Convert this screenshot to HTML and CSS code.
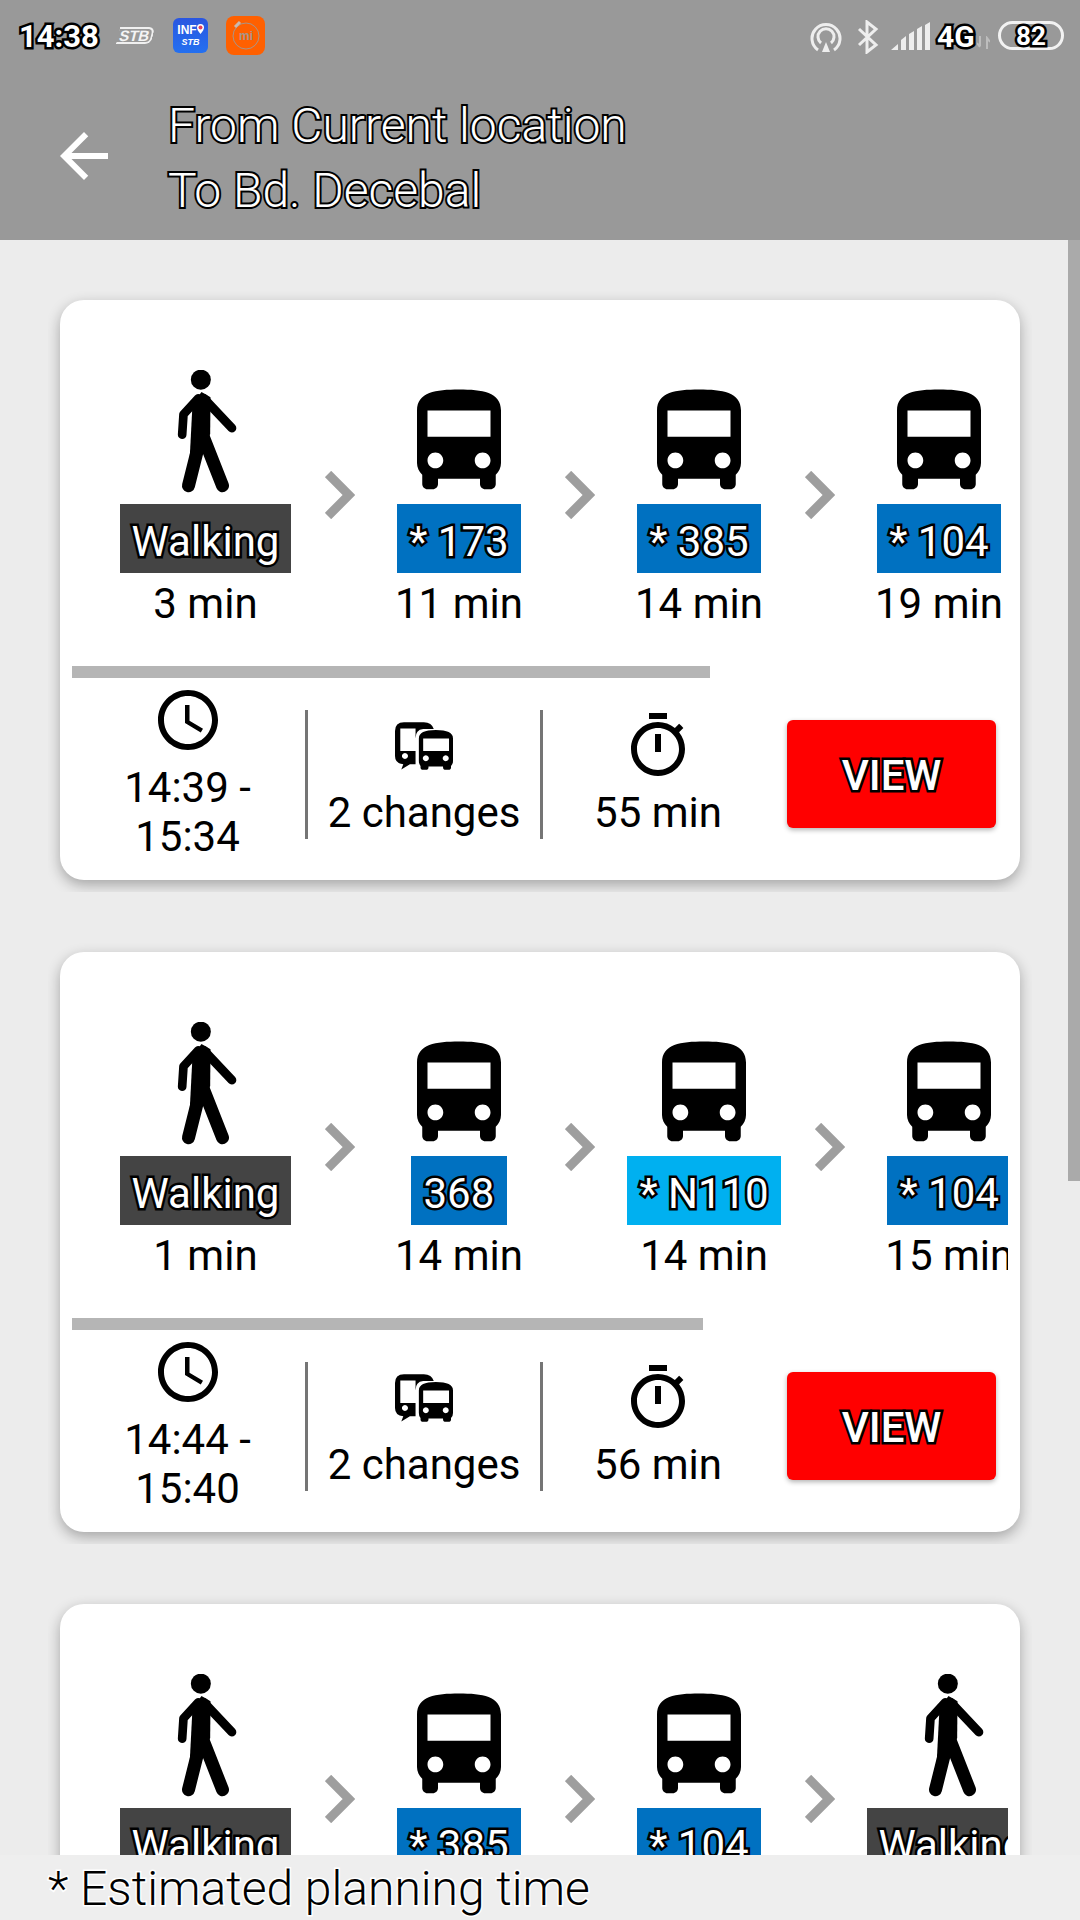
FILE: index.html
```html
<!DOCTYPE html>
<html lang="en">
<head>
    <meta charset="UTF-8">
    <meta name="viewport" content="width=device-width, initial-scale=1.0">
    <title>Route results</title>
    <link rel="stylesheet" href="styles.css">
</head>
<body>
    <svg class="defs" width="0" height="0">
        <defs>
            <symbol id="walk" viewBox="340 90 200 375">
                <circle cx="423" cy="122" r="30"/>
                <path d="M398 195 L425 159 L452 175 L451 285 L430 340 L390 350 Z"/>
                <path d="M432 178 L516 267" fill="none" stroke="#000" stroke-width="27" stroke-linecap="round"/>
                <path d="M415 178 L371 226 L367 287" fill="none" stroke="#000" stroke-width="26" stroke-linecap="round" stroke-linejoin="round"/>
                <path d="M411 340 L386 440" fill="none" stroke="#000" stroke-width="39" stroke-linecap="round"/>
                <path d="M431 295 L488 440" fill="none" stroke="#000" stroke-width="39" stroke-linecap="round"/>
            </symbol>
            <symbol id="bus" viewBox="0 0 24 24">
                <path d="M4 16c0 .88.39 1.67 1 2.22V20c0 .55.45 1 1 1h1c.55 0 1-.45 1-1v-1h8v1c0 .55.45 1 1 1h1c.55 0 1-.45 1-1v-1.78c.61-.55 1-1.34 1-2.22V6c0-3.5-3.58-4-8-4s-8 .5-8 4v10zm3.5 1c-.83 0-1.5-.67-1.5-1.5S6.67 14 7.5 14s1.5.67 1.5 1.5S8.33 17 7.5 17zm9 0c-.83 0-1.5-.67-1.5-1.5s.67-1.5 1.5-1.5 1.5.67 1.5 1.5-.67 1.5-1.5 1.5zm1.5-6H6V6h12v5z"/>
            </symbol>
            <symbol id="chevron" viewBox="0 0 30 48">
                <path d="M3 3 L24 24 L3 45" fill="none" stroke="#9e9e9e" stroke-width="9"/>
            </symbol>
            <symbol id="clock" viewBox="0 0 24 24">
                <path d="M11.99 2C6.47 2 2 6.48 2 12s4.47 10 9.99 10C17.52 22 22 17.52 22 12S17.52 2 11.99 2zM12 20c-4.42 0-8-3.58-8-8s3.58-8 8-8 8 3.58 8 8-3.58 8-8 8zm.5-13H11v6l5.25 3.15.75-1.23-4.5-2.67z"/>
            </symbol>
            <symbol id="changes" viewBox="1005 213 175 144">
                <path fill-rule="evenodd" d="M1032 213 H1092 Q1116 213 1122 234 H1090 Q1067 236 1067 262 V340 H1050 L1024 356 L1030 340 Q1005 338 1005 315 V240 Q1005 213 1032 213 Z M1021 232 V300 H1067 V232 Z M1035 306 a9 9 0 1 0 .1 0 Z"/>
                <path fill-rule="evenodd" d="M1077 262 Q1077 237 1128 237 Q1180 237 1180 262 V330 Q1180 340 1174 345 V350 Q1174 357 1166 357 H1158 Q1150 357 1150 350 V347 H1106 V350 Q1106 357 1098 357 H1090 Q1082 357 1082 350 V345 Q1077 340 1077 330 Z M1090 262 V300 H1168 V262 Z M1098 313 a9 9 0 1 0 .1 0 Z M1158 313 a9 9 0 1 0 .1 0 Z"/>
            </symbol>
            <symbol id="timer" viewBox="0 0 24 24">
                <path d="M15 1H9v2h6V1zm-4 13h2V8h-2v6zm8.03-6.61l1.42-1.42c-.43-.51-.9-.99-1.41-1.41l-1.42 1.42C16.07 4.74 14.12 4 12 4c-4.97 0-9 4.03-9 9s4.02 9 9 9 9-4.03 9-9c0-2.12-.74-4.07-1.97-5.61zM12 20c-3.87 0-7-3.13-7-7s3.13-7 7-7 7 3.13 7 7-3.13 7-7 7z"/>
            </symbol>
        </defs>
    </svg>

    <header class="topbar">
        <div class="status">
            <span class="clock-text outlined">14:38</span>
            <span class="stb">STB</span>
            <span class="app-info">
                <span class="info-top">INF<svg width="7" height="10" viewBox="0 0 7 10"><path d="M3.5 0 A3.5 3.5 0 0 1 7 3.5 Q7 6 3.5 10 Q0 6 0 3.5 A3.5 3.5 0 0 1 3.5 0 Z" fill="#fff"/><circle cx="3.5" cy="3.5" r="2" fill="#e5405a"/></svg></span>
                <i>STB</i>
            </span>
            <span class="app-mi">
                <svg width="39" height="39" viewBox="0 0 39 39">
                    <circle cx="20" cy="20" r="13" fill="none" stroke="#a8958a" stroke-width="1"/>
                    <path d="M9 11 L14 6" stroke="#c9b9ae" stroke-width="3"/>
                </svg>
                <b>mi</b>
            </span>
            <span class="status-right">
                <svg class="ic-hotspot" width="32" height="32" viewBox="0 0 32 32">
                    <path d="M8 29 A14 14 0 1 1 24 29" fill="none" stroke="#eee" stroke-width="3"/>
                    <path d="M11 22 A8 8 0 1 1 21 22" fill="none" stroke="#eee" stroke-width="3"/>
                    <path d="M16 21 L20 31 H12 Z" fill="#eee"/>
                </svg>
                <svg class="ic-bt" width="22" height="34" viewBox="0 0 22 34">
                    <path d="M2 9 L19 25 L10 32 V2 L19 9 L2 25" fill="none" stroke="#eee" stroke-width="3"/>
                </svg>
                <svg class="ic-signal" width="39" height="28" viewBox="0 0 39 28">
                    <path d="M0 28 L7 22 V28 Z M10 28 V18 L15 14 V28 Z M18 28 V12 L23 9 V28 Z M26 28 V7 L31 4 V28 Z M34 28 V3 L39 0 V28 Z" fill="#eee"/>
                </svg>
                <span class="net outlined">4G</span>
                <svg class="ic-data" width="13" height="13" viewBox="0 0 13 13">
                    <path d="M3 0 V10 M0 7 L3 11 M10 13 V2 L13 6" fill="none" stroke="#bdbdbd" stroke-width="2"/>
                </svg>
                <span class="battery"><span class="outlined">82</span></span>
            </span>
        </div>
        <div class="titlebar">
            <svg class="back" width="72" height="72" viewBox="0 0 24 24">
                <path d="M20 11H7.83l5.59-5.59L12 4l-8 8 8 8 1.41-1.41L7.83 13H20v-2z" fill="#fff"/>
            </svg>
            <h1 class="outlined">From Current location<br>To Bd. Decebal</h1>
        </div>
    </header>

    <main class="list">
        <div class="scrollbar"></div>

        <div class="card-wrap">
            <section class="card">
                <div class="strip">
                    <div class="step">
                        <div class="slot"><svg class="walk"><use href="#walk"/></svg></div>
                        <div class="line walking"><span class="outlined">Walking</span></div>
                        <div class="dur">3 min</div>
                    </div>
                    <div class="arrow"><svg width="30" height="48"><use href="#chevron"/></svg></div>
                    <div class="step">
                        <div class="slot"><svg class="bus"><use href="#bus"/></svg></div>
                        <div class="line"><span class="outlined">* 173</span></div>
                        <div class="dur">11 min</div>
                    </div>
                    <div class="arrow"><svg width="30" height="48"><use href="#chevron"/></svg></div>
                    <div class="step">
                        <div class="slot"><svg class="bus"><use href="#bus"/></svg></div>
                        <div class="line"><span class="outlined">* 385</span></div>
                        <div class="dur">14 min</div>
                    </div>
                    <div class="arrow"><svg width="30" height="48"><use href="#chevron"/></svg></div>
                    <div class="step">
                        <div class="slot"><svg class="bus"><use href="#bus"/></svg></div>
                        <div class="line"><span class="outlined">* 104</span></div>
                        <div class="dur">19 min</div>
                    </div>
                </div>
                <div class="progress" style="width: 638px"></div>
                <div class="summary">
                    <div class="cell times">
                        <svg class="sic"><use href="#clock"/></svg>
                        <div>14:39 -<br>15:34</div>
                    </div>
                    <div class="cell changes">
                        <svg class="sic"><use href="#changes" x="7" y="12" width="58" height="48"/></svg>
                        <div>2 changes</div>
                    </div>
                    <div class="cell total">
                        <svg class="sic"><use href="#timer"/></svg>
                        <div>55 min</div>
                    </div>
                    <button class="view" type="button"><span class="outlined">VIEW</span></button>
                </div>
            </section>
        </div>

        <div class="card-wrap">
            <section class="card">
                <div class="strip">
                    <div class="step">
                        <div class="slot"><svg class="walk"><use href="#walk"/></svg></div>
                        <div class="line walking"><span class="outlined">Walking</span></div>
                        <div class="dur">1 min</div>
                    </div>
                    <div class="arrow"><svg width="30" height="48"><use href="#chevron"/></svg></div>
                    <div class="step">
                        <div class="slot"><svg class="bus"><use href="#bus"/></svg></div>
                        <div class="line"><span class="outlined">368</span></div>
                        <div class="dur">14 min</div>
                    </div>
                    <div class="arrow"><svg width="30" height="48"><use href="#chevron"/></svg></div>
                    <div class="step">
                        <div class="slot"><svg class="bus"><use href="#bus"/></svg></div>
                        <div class="line night"><span class="outlined">* N110</span></div>
                        <div class="dur">14 min</div>
                    </div>
                    <div class="arrow"><svg width="30" height="48"><use href="#chevron"/></svg></div>
                    <div class="step">
                        <div class="slot"><svg class="bus"><use href="#bus"/></svg></div>
                        <div class="line"><span class="outlined">* 104</span></div>
                        <div class="dur">15 min</div>
                    </div>
                </div>
                <div class="progress" style="width: 631px"></div>
                <div class="summary">
                    <div class="cell times">
                        <svg class="sic"><use href="#clock"/></svg>
                        <div>14:44 -<br>15:40</div>
                    </div>
                    <div class="cell changes">
                        <svg class="sic"><use href="#changes" x="7" y="12" width="58" height="48"/></svg>
                        <div>2 changes</div>
                    </div>
                    <div class="cell total">
                        <svg class="sic"><use href="#timer"/></svg>
                        <div>56 min</div>
                    </div>
                    <button class="view" type="button"><span class="outlined">VIEW</span></button>
                </div>
            </section>
        </div>

        <div class="card-wrap">
            <section class="card">
                <div class="strip">
                    <div class="step">
                        <div class="slot"><svg class="walk"><use href="#walk"/></svg></div>
                        <div class="line walking"><span class="outlined">Walking</span></div>
                    </div>
                    <div class="arrow"><svg width="30" height="48"><use href="#chevron"/></svg></div>
                    <div class="step">
                        <div class="slot"><svg class="bus"><use href="#bus"/></svg></div>
                        <div class="line"><span class="outlined">* 385</span></div>
                    </div>
                    <div class="arrow"><svg width="30" height="48"><use href="#chevron"/></svg></div>
                    <div class="step">
                        <div class="slot"><svg class="bus"><use href="#bus"/></svg></div>
                        <div class="line"><span class="outlined">* 104</span></div>
                    </div>
                    <div class="arrow"><svg width="30" height="48"><use href="#chevron"/></svg></div>
                    <div class="step">
                        <div class="slot"><svg class="walk"><use href="#walk"/></svg></div>
                        <div class="line walking"><span class="outlined">Walking</span></div>
                    </div>
                </div>
            </section>
        </div>
    </main>

    <footer class="note">* Estimated planning time</footer>
</body>
</html>
```

FILE: styles.css
```css
* {
    box-sizing: border-box;
}

body {
    font-family: 'Roboto', sans-serif;
    margin: 0;
    width: 1080px;
    height: 1920px;
    display: flex;
    flex-direction: column;
    overflow: hidden;
    background: #ececec;
    color: #000;
}

.defs {
    position: absolute;
}

.outlined {
    color: #fff;
    -webkit-text-stroke: 5px #000;
    paint-order: stroke fill;
}

/* top bar */
.topbar {
    flex: none;
    height: 240px;
    background: #999;
}

.status {
    height: 66px;
    padding: 14px 16px 0 19px;
    display: flex;
    align-items: flex-start;
}

.clock-text {
    font-size: 31px;
    font-weight: 700;
    line-height: 40px;
    width: 79px;
    margin-top: 3px;
    white-space: nowrap;
}

.stb {
    margin: 13px 0 0 20px;
    width: 35px;
    height: 17px;
    transform: skewX(-14deg);
    border: 2px solid #f0f0f0;
    border-left: none;
    border-radius: 0 6px 6px 0;
    font: 700 15px/13px 'Liberation Sans', sans-serif;
    text-align: center;
    color: #f4f4f4;
}

.app-info {
    margin: 4px 0 0 20px;
    width: 35px;
    height: 35px;
    border-radius: 6px;
    background: linear-gradient(#2a56e0, #2470f0);
    color: #fff;
    display: flex;
    flex-direction: column;
    align-items: center;
    font-family: 'Liberation Sans', sans-serif;
}

.info-top {
    font-size: 12px;
    font-weight: 700;
    line-height: 12px;
    margin-top: 6px;
    white-space: nowrap;
}

.app-info i {
    font-size: 9px;
    font-weight: 700;
    line-height: 10px;
    margin-top: 1px;
}

.app-mi {
    position: relative;
    margin: 2px 0 0 18px;
    width: 39px;
    height: 39px;
    border-radius: 8px;
    background: #ff6000;
    display: flex;
    align-items: center;
    justify-content: center;
}

.app-mi svg {
    position: absolute;
    top: 0;
    left: 0;
}

.app-mi b {
    margin-left: 1px;
    color: #a8958a;
    font: 700 12px/12px 'Liberation Sans', sans-serif;
}

.status-right {
    margin-left: auto;
    display: flex;
    align-items: flex-start;
}

.ic-hotspot {
    margin-top: 7px;
}

.ic-bt {
    margin: 6px 0 0 15px;
}

.ic-signal {
    margin: 8px 0 0 12px;
}

.net {
    margin: 5px 0 0 7px;
    width: 38px;
    font-size: 30px;
    font-weight: 700;
    line-height: 36px;
}

.ic-data {
    margin: 22px 0 0 2px;
}

.battery {
    margin: 7px 0 0 8px;
    width: 66px;
    height: 29px;
    border: 3px solid #f2f2f2;
    border-radius: 15px;
    display: flex;
    align-items: center;
    justify-content: center;
    font-size: 26px;
    font-weight: 700;
    line-height: 24px;
}

.titlebar {
    display: flex;
    align-items: center;
    height: 128px;
    margin-top: 28px;
}

.back {
    margin: 0 0 4px 48px;
}

.titlebar h1 {
    margin: 0 0 0 48px;
    font-size: 48px;
    font-weight: 300;
    line-height: 65px;
    -webkit-text-stroke-width: 4px;
}

/* list of routes */
.list {
    flex: 1;
    position: relative;
    overflow: hidden;
    padding-top: 48px;
}

.scrollbar {
    position: absolute;
    top: 0;
    right: 0;
    width: 12px;
    height: 941px;
    background: #aaa;
}

.card-wrap {
    width: 984px;
    margin: 0 0 48px 48px;
    padding: 12px;
    overflow: hidden;
}

.card {
    height: 580px;
    padding: 70px 12px 0;
    background: #fff;
    border-radius: 24px;
    box-shadow: 0 5px 14px rgba(0, 0, 0, 0.3);
}

.strip {
    display: flex;
    padding-left: 48px;
    overflow: hidden;
}

.step {
    flex: none;
    min-width: 144px;
    display: flex;
    flex-direction: column;
    align-items: center;
}

.slot {
    height: 134px;
    display: flex;
    align-items: flex-end;
    justify-content: center;
}

.walk {
    width: 67px;
    height: 125px;
    margin: 0 0 10px 2px;
}

.bus {
    width: 126px;
    height: 126px;
    margin-bottom: -1px;
}

.line {
    height: 69px;
    padding: 6px 12.5px 0;
    background: #0071c1;
    font-size: 42px;
    line-height: 63px;
    white-space: nowrap;
}

.line.walking {
    padding: 6px 11.5px 0;
    background: #444;
}

.line.night {
    background: #00b0f0;
}

.dur {
    margin-top: 7px;
    font-size: 42px;
    line-height: 48px;
    white-space: nowrap;
}

.arrow {
    flex: none;
    width: 96px;
    height: 48px;
    margin-top: 101px;
    padding-left: 2px;
    display: flex;
    justify-content: center;
}

.progress {
    height: 12px;
    margin-top: 38px;
    background: #b5b5b5;
}

.summary {
    display: flex;
    align-items: center;
    padding: 6px 12px 0 0;
    font-size: 42px;
    line-height: 48px;
    text-align: center;
}

.cell {
    display: flex;
    flex-direction: column;
    align-items: center;
    gap: 7px;
    white-space: nowrap;
}

.times {
    width: 233px;
    padding-right: 2px;
    line-height: 49px;
}

.changes,
.total {
    height: 129px;
    margin-top: 4px;
    border-left: 3px solid #757575;
}

.changes {
    width: 235px;
}

.total {
    width: 233px;
}

.sic {
    width: 72px;
    height: 72px;
    flex: none;
}

.view {
    width: 209px;
    height: 108px;
    margin: 2px 0 0 14px;
    padding: 4px 0 0;
    border: none;
    border-radius: 6px;
    background: #f00;
    box-shadow: 0 2px 5px rgba(0, 0, 0, 0.3);
    font-family: inherit;
    font-size: 42px;
    font-weight: 500;
}

/* bottom note */
.note {
    flex: none;
    position: relative;
    height: 65px;
    padding: 5px 0 0 48px;
    background: #eee;
    font-size: 48px;
    font-weight: 300;
    line-height: 58px;
    color: #000;
    -webkit-text-stroke: 3px #fff;
    paint-order: stroke fill;
    white-space: nowrap;
}
```
